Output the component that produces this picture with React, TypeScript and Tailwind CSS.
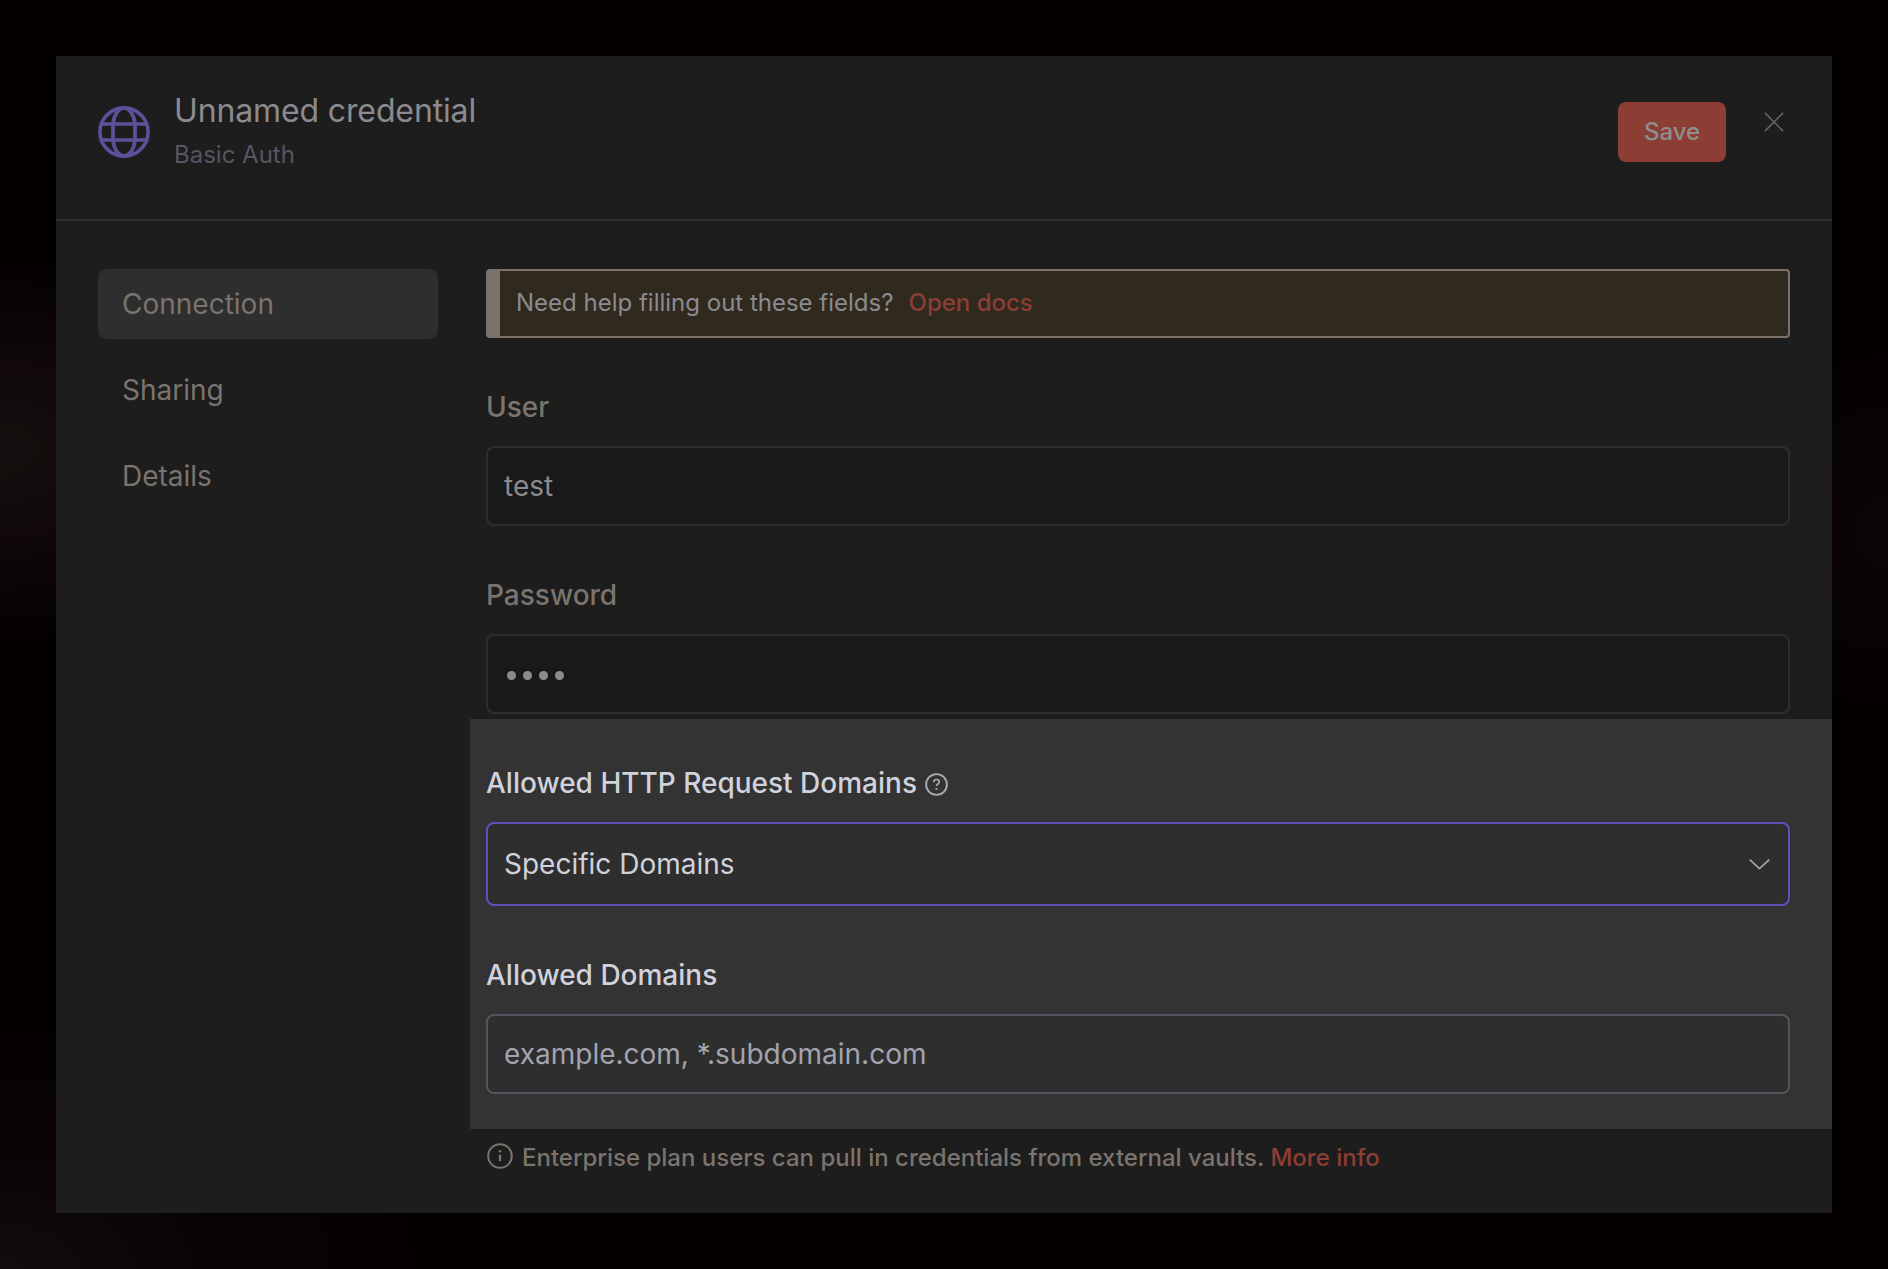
import type { ReactNode } from "react";

function GlobeIcon() {
  return (
    <svg className="h-[52px] w-[52px] shrink-0" viewBox="0 0 52 52" fill="none" stroke="#5a519b" strokeWidth="3.700">
      <circle cx="26" cy="26" r="24.100" />
      <path d="M15 26v-8C15.800 9 20.500 2 26 2s10.200 7 11 16v16c-.8 9-5.500 16-11 16s-10.200-7-11-16Z" />
      <path d="M3.500 18h45M3.500 34h45" />
    </svg>
  );
}

function CloseIcon() {
  return (
    <svg className="h-5 w-5" viewBox="0 0 20 20" fill="none" stroke="#66656c" strokeWidth="1.500">
      <path d="M.9.9l18.200 18.200M19.100.9L.9 19.100" />
    </svg>
  );
}

function HelpIcon() {
  return (
    <svg className="mt-[3px] h-[23px] w-[23px]" viewBox="0 0 23 23" fill="none" stroke="#a9abb2" strokeWidth="1.900">
      <circle cx="11.500" cy="11.500" r="10.400" />
      <path d="M8.700 9.200c0-1.600 1.200-2.700 2.800-2.700s2.800 1 2.800 2.500c0 1.900-2.800 2-2.800 4" strokeWidth="1.700" />
      <circle cx="11.500" cy="16" r="1.100" fill="#a9abb2" stroke="none" />
    </svg>
  );
}

function InfoIcon() {
  return (
    <svg className="-mt-[3px] h-[26px] w-[26px]" viewBox="0 0 26 26" fill="none" stroke="#7b746e" strokeWidth="2">
      <circle cx="13" cy="13" r="11.800" />
      <path d="M13 11.800v6.400" strokeWidth="2.400" />
      <circle cx="13" cy="8.200" r="1.300" fill="#7b746e" stroke="none" />
    </svg>
  );
}

function ChevronIcon() {
  return (
    <svg className="mt-px h-[11px] w-[21px]" viewBox="0 0 21 11" fill="none" stroke="#a5a5a5" strokeWidth="1.700">
      <path d="M.7.7l9.800 9 9.800-9" />
    </svg>
  );
}

function Label({ children, bright = false }: { children: ReactNode; bright?: boolean }) {
  return (
    <div
      className={`mb-[19px] flex h-10 items-center gap-2 text-[28px] leading-10 font-medium ${
        bright ? "text-[#d0d2dd]" : "text-[#7b746e]"
      }`}
    >
      {children}
    </div>
  );
}

function DimField({ label, children }: { label: string; children: ReactNode }) {
  return (
    <div className="mt-[49px]">
      <Label>{label}</Label>
      <div className="flex h-20 items-center rounded-lg border-2 border-[#2d2d2d] bg-[#191919] pl-4 text-[28px] leading-10 text-[#8b8b8f]">
        {children}
      </div>
    </div>
  );
}

const tabs = ["Connection", "Sharing", "Details"];

export default function App() {
  return (
    <div className="h-[1269px] w-[1888px] overflow-hidden bg-[#040001] bg-[radial-gradient(ellipse_260px_190px_at_0px_450px,#15100f_0%,#100809_45%,transparent_100%),radial-gradient(ellipse_420px_240px_at_0px_1269px,#120c0c_0%,#0b0405_45%,transparent_100%),radial-gradient(ellipse_160px_180px_at_1888px_530px,#0c0506_0%,transparent_100%)] px-14 pt-14 font-['Inter',sans-serif]">
      <div className="flex h-[1157px] flex-col bg-[#1d1d1d]">
        <header className="flex h-[165px] shrink-0 border-b-2 border-[#2e2e2e] pr-12 pl-[42px]">
          <div className="mt-[50px]">
            <GlobeIcon />
          </div>
          <div className="ml-6 pt-[35px]">
            <h1 className="text-[32px] leading-10 tracking-[-0.13px] text-[#8b8b8f]">Unnamed credential</h1>
            <p className="mt-1 text-2xl leading-10 text-[#57555f]">Basic Auth</p>
          </div>
          <button className="mt-[46px] ml-auto h-[60px] w-[108px] rounded-lg bg-[#8c3d34] pb-px text-2xl font-medium text-[#8e8e8f]">
            Save
          </button>
          <button className="mt-14 ml-[38px] h-5 w-5" aria-label="Close">
            <CloseIcon />
          </button>
        </header>

        <div className="flex flex-1 pt-12 pr-[42px] pl-[42px]">
          <nav className="flex w-[340px] shrink-0 flex-col gap-4">
            {tabs.map((tab, i) => (
              <a
                key={tab}
                className={`flex h-[70px] items-center rounded-lg pl-6 text-[28px] leading-10 text-[#7b746e] ${
                  i === 0 ? "bg-[#2e2e2e]" : ""
                }`}
              >
                {tab}
              </a>
            ))}
          </nav>

          <main className="ml-12 w-[1304px] shrink-0">
            <div className="flex h-[69px] items-center rounded border-2 border-l-[14px] border-[#7b736b] bg-[#30291e] pb-[2px] pl-4 text-2xl text-[#8b8b8f]">
              <span>Need help filling out these fields?</span>
              <a className="ml-[15px] font-medium text-[#8c3d34]">Open docs</a>
            </div>

            <DimField label="User">test</DimField>
            <DimField label="Password">
              <div className="mt-[3px] ml-[3px] flex gap-[7px]">
                {[0, 1, 2, 3].map((n) => (
                  <span key={n} className="h-[9px] w-[9px] rounded-full bg-[#8b8b8f]" />
                ))}
              </div>
            </DimField>

            <section className="mt-[5px] -mr-[42px] -ml-4 h-[410px] bg-[#333333] pt-11 pr-[42px] pl-4">
              <Label bright>
                <span>Allowed HTTP Request Domains</span>
                <HelpIcon />
              </Label>
              <div className="flex h-[84px] items-center justify-between rounded-lg border-2 border-[#6050bf] bg-[#2e2e2e] pr-[18px] pl-4 text-[28px] leading-10 text-[#d0d2dd]">
                <span>Specific Domains</span>
                <ChevronIcon />
              </div>
              <div className="mt-[49px]">
                <Label bright>Allowed Domains</Label>
                <div className="flex h-20 items-center rounded-lg border-2 border-[#56545f] bg-[#2e2e2e] pl-4 text-[28px] leading-10 text-[#a2a4b0]">
                  example.com, *.subdomain.com
                </div>
              </div>
            </section>

            <div className="mt-2 ml-px flex h-10 items-center text-2xl font-medium text-[#7b746e]">
              <InfoIcon />
              <p className="mt-[2px] ml-[9px]">
                Enterprise plan users can pull in credentials from external vaults.{" "}
                <a className="text-[#8c3d34]">More info</a>
              </p>
            </div>
          </main>
        </div>
      </div>
    </div>
  );
}
